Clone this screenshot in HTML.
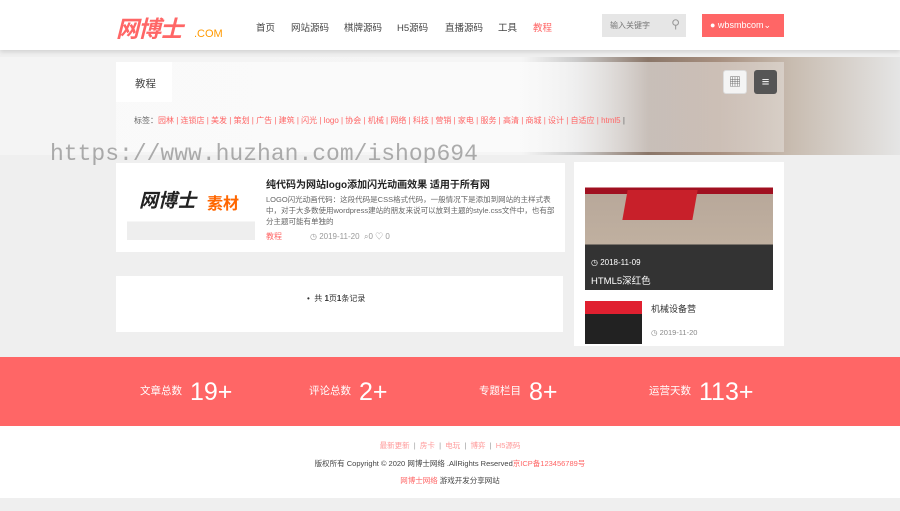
<!DOCTYPE html><html><head><meta charset="utf-8"><style>
*{margin:0;padding:0;box-sizing:border-box}
body{width:900px;height:511px;overflow:hidden;background:#efefef;font-family:"Liberation Sans","Noto Sans CJK SC",sans-serif;font-size:9px;color:#333;position:relative}
.a{position:absolute}
.hdr{left:0;top:0;width:900px;height:50px;background:#fff;box-shadow:0 2px 4px rgba(0,0,0,.12)}
.nav span{position:absolute;top:20px;font-size:9.5px;color:#444}
.red{color:#f66}
.st{color:#fff;font-size:10.5px}
.st span{font-size:25px;margin-left:8px;vertical-align:-6px}
</style></head><body>
<div class="a hdr">
 <div class="a" style="left:116px;top:10px;font-size:23px;font-weight:bold;color:#f66;font-style:italic;letter-spacing:-1px">网博士</div>
 <div class="a" style="left:194px;top:28px;font-size:11px;color:#f90">.COM</div>
 <div class="nav"><span style="left:256px">首页</span><span style="left:291px">网站源码</span><span style="left:344px">棋牌源码</span><span style="left:397px">H5源码</span><span style="left:445px">直播源码</span><span style="left:498px">工具</span><span style="left:533px;color:#f66">教程</span></div>
 <div class="a" style="left:602px;top:14px;width:84px;height:23px;background:#e6e6e6;color:#777;font-size:8px;padding:6px 8px">输入关键字<span style="position:absolute;right:6px;top:3px;font-size:12px;color:#999">⚲</span></div>
 <div class="a" style="left:702px;top:14px;width:82px;height:23px;background:#f66;color:#fff;font-size:9px;padding:6px 0 0 8px">● wbsmbcom⌄</div>
</div>
<div class="a" style="left:0;top:57px;width:900px;height:98px;background:linear-gradient(90deg,#f4f4f4 0%,#f5f5f5 58%,#ccc 64%,#8a7668 72%,#a89080 80%,#c8bcb0 88%,#e5e5e5 100%)"></div>
<div class="a" style="left:116px;top:62px;width:668px;height:90px;background:linear-gradient(90deg,rgba(250,250,250,.9) 60%,rgba(250,250,250,.55) 80%,rgba(250,250,250,.35))"></div>
<div class="a" style="left:116px;top:62px;width:56px;height:40px;background:#fff"></div>
<div class="a" style="left:135px;top:76px;font-size:10.5px;color:#444">教程</div>
<div class="a" style="left:723px;top:70px;width:24px;height:24px;background:#f4f4f4;border:1px solid #ddd;border-radius:3px;color:#666;text-align:center;font-size:12px;line-height:22px">▦</div>
<div class="a" style="left:754px;top:70px;width:23px;height:24px;background:#555;border-radius:3px;color:#fff;text-align:center;font-size:13px;line-height:23px">≡</div>
<div class="a" style="left:134px;top:115px;font-size:8px;color:#666">标签：<span class="red">园林 | 连锁店 | 美发 | 策划 | 广告 | 建筑 | 闪光 | logo | 协会 | 机械 | 网络 | 科技 | 营销 | 家电 | 服务 | 高清 | 商城 | 设计 | 自适应 | html5</span> |</div>
<div class="a" style="left:50px;top:141px;font-family:'Liberation Mono',monospace;font-size:23px;color:rgba(120,120,120,.6)">https://www.huzhan.com/ishop694</div>
<div class="a" style="left:116px;top:163px;width:449px;height:89px;background:#fff"></div>
<div class="a" style="left:127px;top:178px;width:128px;height:62px;background:linear-gradient(#fff 70%,#eee 70%)"><div style="position:absolute;left:12px;top:8px;font-size:19px;font-weight:bold;color:#222;font-style:italic">网博士</div><div style="position:absolute;left:80px;top:12px;font-size:16px;font-weight:bold;color:#f60">素材</div></div>
<div class="a" style="left:266px;top:176px;font-size:10px;font-weight:bold;color:#222">纯代码为网站logo添加闪光动画效果 适用于所有网</div>
<div class="a" style="left:266px;top:194px;width:290px;font-size:7.5px;line-height:11px;color:#666">LOGO闪光动画代码：这段代码是CSS格式代码，一般情况下是添加到网站的主样式表中，对于大多数使用wordpress建站的朋友来说可以放到主题的style.css文件中，也有部分主题可能有单独的</div>
<div class="a" style="left:266px;top:231px;font-size:8px;color:#999"><span class="red">教程</span><span style="margin-left:28px">◷ 2019-11-20 &nbsp;⌕0 ♡ 0</span></div>
<div class="a" style="left:116px;top:276px;width:447px;height:56px;background:#fff"></div>
<div class="a" style="left:307px;top:293px;font-size:8px;color:#333">• &nbsp;共 <b>1</b>页<b>1</b>条记录</div>
<div class="a" style="left:574px;top:162px;width:210px;height:184px;background:#fff"></div>
<div class="a" style="left:585px;top:176px;width:188px;height:114px;background:linear-gradient(#fff 0,#fff 10%,#a01020 10%,#a01020 16%,#b8a89a 16%,#c0b0a0 60%,#333 60%)"></div>
<div class="a" style="left:625px;top:190px;width:70px;height:30px;background:#c8202a;transform:skewX(-10deg)"></div>
<div class="a" style="left:591px;top:258px;font-size:8px;color:#fff">◷ 2018-11-09</div>
<div class="a" style="left:591px;top:273px;font-size:9.5px;color:#fff">HTML5深红色</div>
<div class="a" style="left:585px;top:301px;width:57px;height:43px;background:linear-gradient(#e02030 30%,#222 30%)"></div>
<div class="a" style="left:651px;top:302px;font-size:9px;color:#333">机械设备营</div>
<div class="a" style="left:651px;top:328px;font-size:7.5px;color:#888">◷ 2019-11-20</div>
<div class="a" style="left:0;top:357px;width:900px;height:69px;background:#ff6666"></div>
<div class="a st" style="left:140px;top:378px">文章总数<span>19+</span></div>
<div class="a st" style="left:309px;top:378px">评论总数<span>2+</span></div>
<div class="a st" style="left:479px;top:378px">专题栏目<span>8+</span></div>
<div class="a st" style="left:649px;top:378px">运营天数<span>113+</span></div>
<div class="a" style="left:0;top:426px;width:900px;height:72px;background:#fff"></div>
<div class="a" style="left:0;top:440px;width:900px;text-align:center;font-size:7.5px;color:#f99">最新更新 &nbsp;<span style="color:#999">|</span>&nbsp; 房卡 &nbsp;<span style="color:#999">|</span>&nbsp; 电玩 &nbsp;<span style="color:#999">|</span>&nbsp; 博弈 &nbsp;<span style="color:#999">|</span>&nbsp; H5源码</div>
<div class="a" style="left:0;top:458px;width:900px;text-align:center;font-size:7.5px;color:#444">版权所有 Copyright © 2020 网博士网络 .AllRights Reserved<span class="red">京ICP备123456789号</span></div>
<div class="a" style="left:0;top:475px;width:900px;text-align:center;font-size:7.5px;color:#444"><span class="red">网博士网络</span> 游戏开发分享网站</div>
</body></html>
